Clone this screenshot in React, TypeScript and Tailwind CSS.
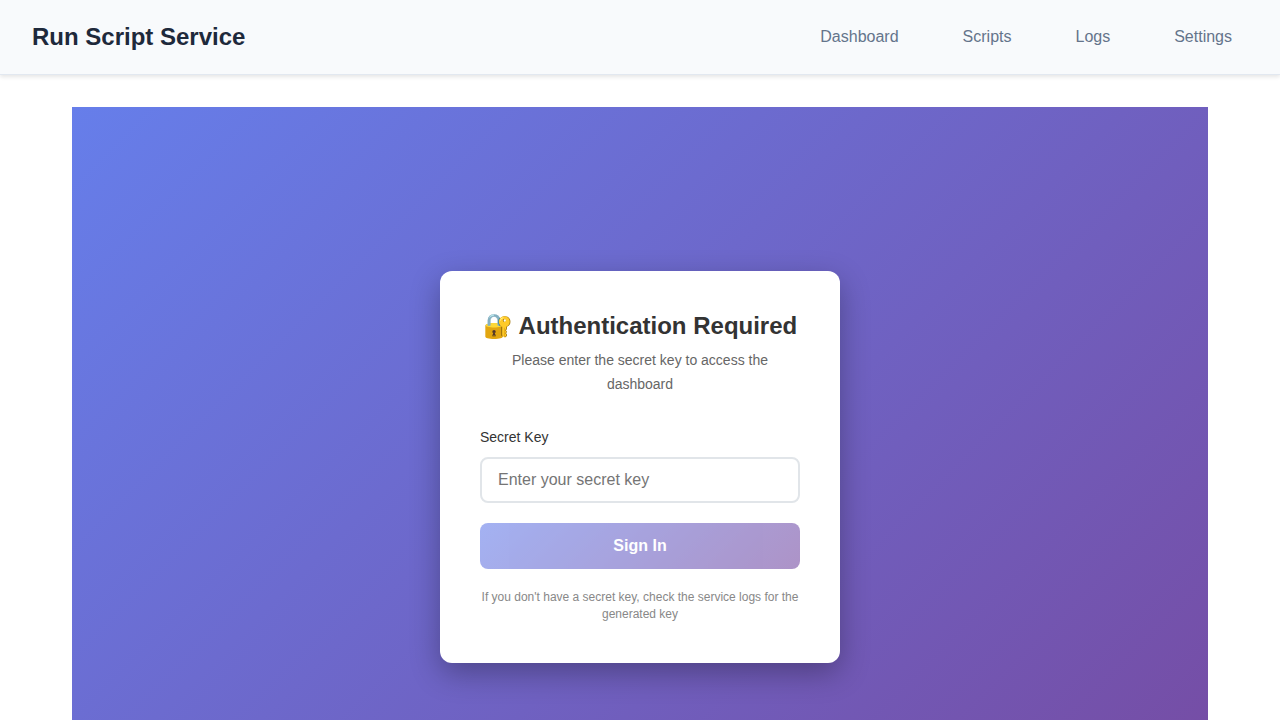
import React, { useState } from "react";

const links = ["Dashboard", "Scripts", "Logs", "Settings"];

export default function App() {
  const [key, setKey] = useState("");

  return (
    <div className="min-h-screen bg-white font-['Liberation_Sans',Arial,sans-serif] text-base text-[#1e293b]">
      <header className="flex items-center justify-between border-b border-[#e2e8f0] bg-[#f8fafc] px-8 py-4 shadow-[0_2px_4px_rgba(0,0,0,0.1)]">
        <h1 className="text-2xl leading-[42px] font-bold">Run Script Service</h1>
        <nav className="flex gap-8">
          {links.map((label) => (
            <a key={label} href={`#${label.toLowerCase()}`} className="rounded px-4 py-2 leading-6 text-[#64748b]">
              {label}
            </a>
          ))}
        </nav>
      </header>
      <main className="mx-auto max-w-[1200px] p-8">
        <section className="flex min-h-screen items-center justify-center bg-[linear-gradient(135deg,#667eea_0%,#764ba2_100%)] p-5">
          <div className="w-full max-w-[400px] rounded-xl bg-white p-10 shadow-[0_10px_30px_rgba(0,0,0,0.3)]">
            <div className="mb-[29px] text-center">
              <h2 className="mb-2 text-2xl leading-[29px] font-semibold text-[#333]">🔐 Authentication Required</h2>
              <p className="text-sm leading-6 text-[#666]">Please enter the secret key to access the dashboard</p>
            </div>
            <form onSubmit={(e) => e.preventDefault()}>
              <label htmlFor="secret-key" className="mb-2 block text-sm leading-6 text-[#333]">
                Secret Key
              </label>
              <input
                id="secret-key"
                type="password"
                value={key}
                onChange={(e) => setKey(e.target.value)}
                placeholder="Enter your secret key"
                className="mb-5 block h-[46px] w-full rounded-lg border-2 border-[#e1e5e9] px-4 text-base placeholder:text-[#757575]"
              />
              <button
                type="submit"
                disabled={!key}
                className="block h-[46px] w-full rounded-lg bg-[linear-gradient(135deg,#667eea_0%,#764ba2_100%)] text-base font-semibold text-white disabled:opacity-60"
              >
                Sign In
              </button>
            </form>
            <p className="mt-5 text-center text-xs leading-[17px] text-[#888]">
              If you don't have a secret key, check the service logs for the generated key
            </p>
          </div>
        </section>
      </main>
    </div>
  );
}
